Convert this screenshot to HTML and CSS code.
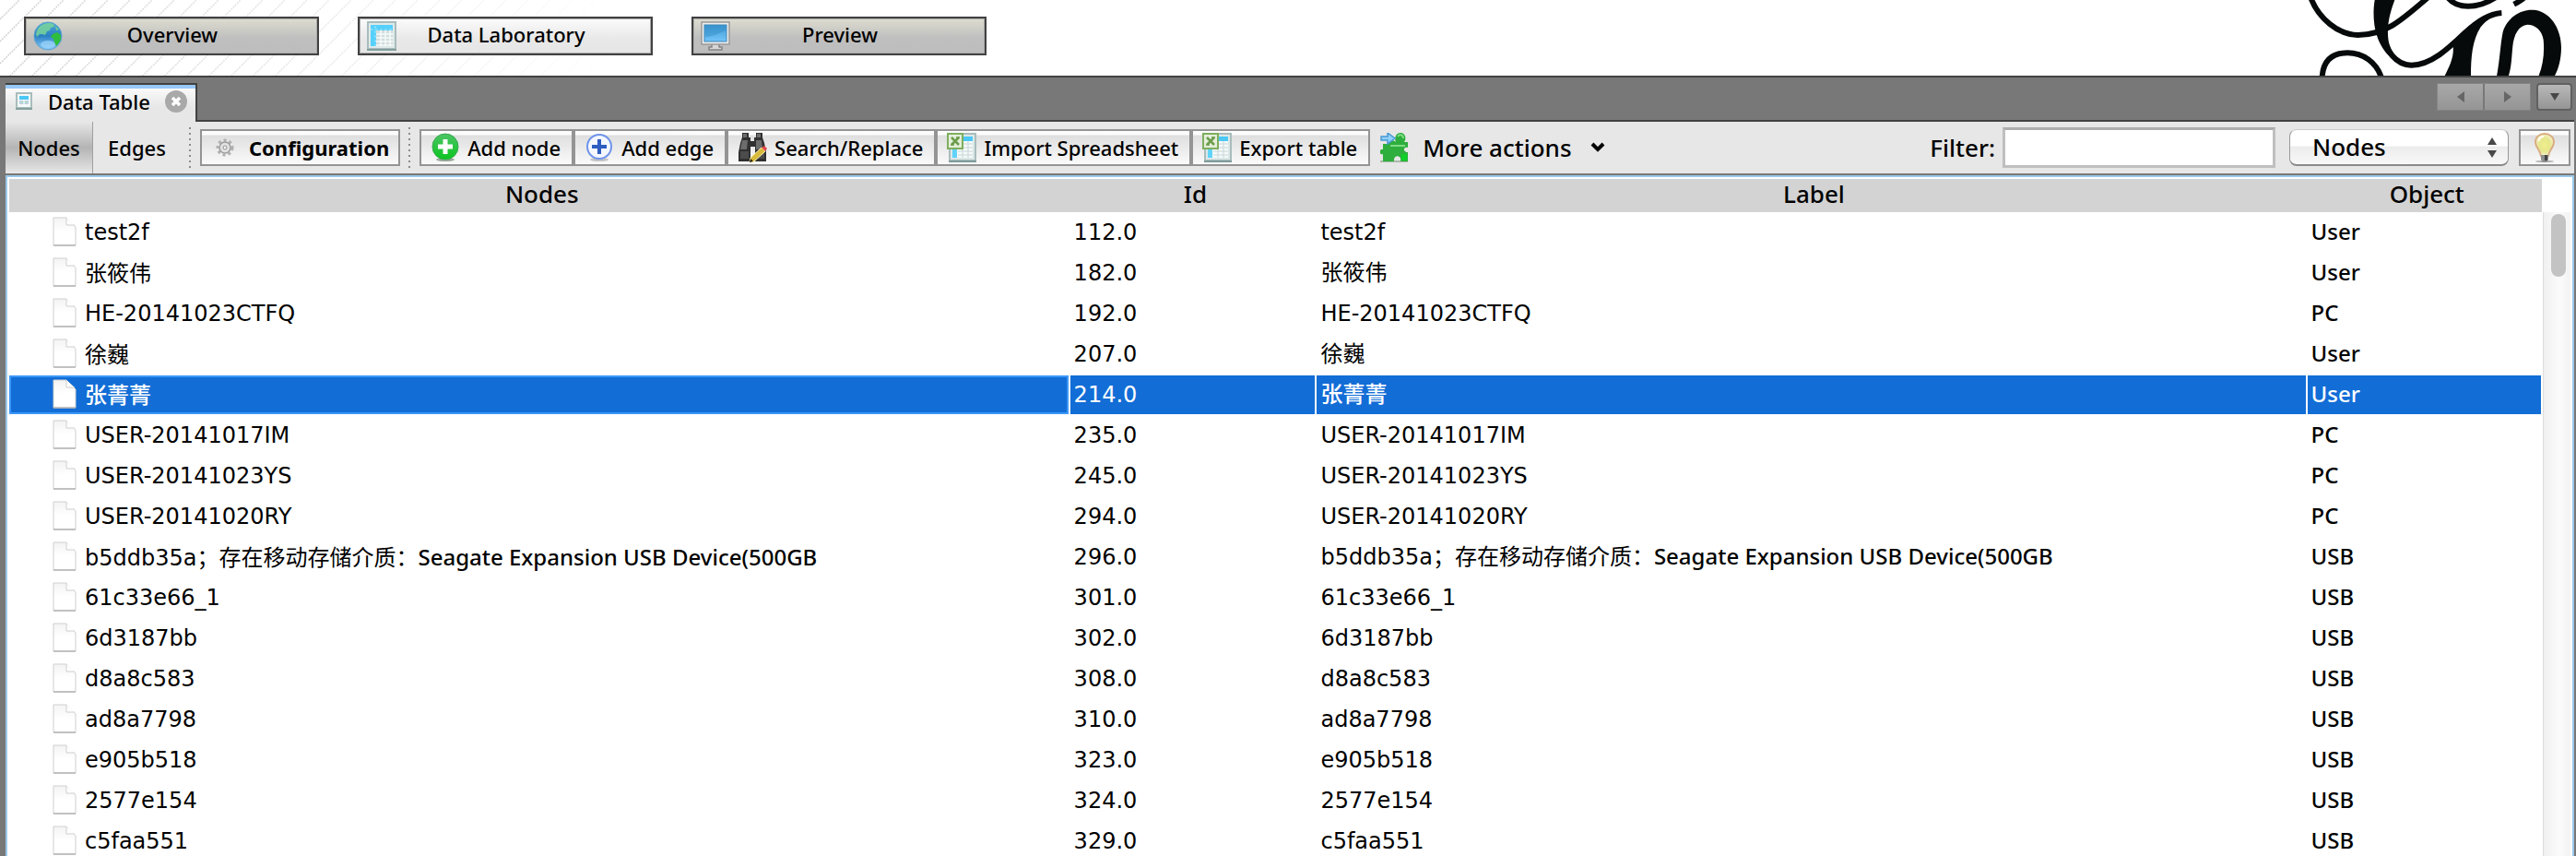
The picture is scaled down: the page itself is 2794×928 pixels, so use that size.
FILE: index.html
```html
<!DOCTYPE html>
<html lang="en">
<head>
<meta charset="utf-8">
<title>Data Laboratory</title>
<link rel="stylesheet" href="styles.css">
</head>
<body>
<svg class="defs" aria-hidden="true">
  <defs>
    <linearGradient id="page-fill" x1="0" y1="0" x2="0" y2="1"><stop offset="0" stop-color="#f3f3f3"/><stop offset=".5" stop-color="#fff"/></linearGradient>
    <linearGradient id="ocean" x1="0" y1="0" x2="0" y2="1"><stop offset="0" stop-color="#4fa6da"/><stop offset=".5" stop-color="#2a80c2"/><stop offset="1" stop-color="#8ccfff"/></linearGradient>
    <linearGradient id="screen" x1="0" y1="0" x2="0" y2="1"><stop offset="0" stop-color="#3d97cf"/><stop offset="1" stop-color="#74c6fb"/></linearGradient>
    <linearGradient id="green" x1="0" y1="0" x2="0" y2="1"><stop offset="0" stop-color="#4cc465"/><stop offset="1" stop-color="#0bc51f"/></linearGradient>
    <radialGradient id="glow"><stop offset="0" stop-color="#f0f08c"/><stop offset=".6" stop-color="#e6e68c"/><stop offset="1" stop-color="#f4f2cc"/></radialGradient>
    <symbol id="page" viewBox="0 0 28 32">
      <path d="M2 1h14l10 10v20H2z" fill="url(#page-fill)" stroke="#cfcfcf" stroke-width="1"/>
      <path d="M2 31h24" stroke="#b4b4b4" stroke-width="1.500"/>
      <path d="M16 1v8h9" fill="#fff" stroke="#cfcfcf"/>
    </symbol>
    <symbol id="sheet" viewBox="0 0 32 32">
      <rect x="3" y="1" width="28" height="29" fill="#dce8e8" stroke="#a9bcbc" stroke-width="2"/>
      <path d="M2 31h30" stroke="#7f9c9c" stroke-width="2"/>
      <rect x="6" y="4" width="22" height="23" fill="#f4f9f9"/>
      <path d="M18 4h10v5H18z" fill="#4cc8f5"/><path d="M6 18h5v9H6z" fill="#5fd3fa"/>
      <path d="M12 12h16M12 16h16M12 20h16M12 24h16M17 9v18M23 9v18" stroke="#c9d6d6" stroke-width="1"/>
      <rect x="1" y="1" width="16" height="16" fill="#e4efda" stroke="#7fae5e" stroke-width="2"/>
      <path d="M5 5l8 8M13 5l-8 8" stroke="#6c9c4c" stroke-width="2.500"/><path d="M4 13h4M10 5h4" stroke="#6c9c4c" stroke-width="1.500"/>
    </symbol>
  </defs>
</svg>

<header class="banner">
  <svg class="hatch" aria-hidden="true">
    <defs>
      <pattern id="stripes" width="24" height="24" patternUnits="userSpaceOnUse">
        <path d="M0 21L21 0M20 25L25 20" stroke="#d2d2d2" stroke-width="1.500" stroke-dasharray="2 1"/>
      </pattern>
      <linearGradient id="fade"><stop offset="0" stop-color="#fff"/><stop offset="1" stop-color="#fff" stop-opacity="0"/></linearGradient>
      <mask id="fader"><rect width="100%" height="100%" fill="url(#fade)"/></mask>
    </defs>
    <rect width="100%" height="100%" fill="url(#stripes)" mask="url(#fader)"/>
  </svg>
  <nav class="perspectives">
    <button class="perspective" type="button">
      <svg class="icon" viewBox="0 0 32 32"><circle cx="16" cy="16" r="15" fill="url(#ocean)" stroke="#5aa4cf" stroke-width="1"/><path d="M8 5c4-3 10-4 14-2l1 3-4 1-1 3-3 1-2 4-3-1-3 0-3 3-1-3c1-4 2-7 5-9z" fill="#78d39a" opacity=".85"/><path d="M21 14l5-2 4 3v4c-1 4-3 6-5 8l-2-4-1-4-3-2z" fill="#2fbd3e"/><path d="M24 5l4 4-3 1z" fill="#6fd08c"/><ellipse cx="16" cy="25" rx="8" ry="4" fill="#a8defe" opacity=".6"/></svg>
      <span>Overview</span>
    </button>
    <button class="perspective active" type="button">
      <svg class="icon" viewBox="0 0 32 32"><rect x="1" y="1" width="30" height="29" fill="#dfe9e9" stroke="#a9bcbc" stroke-width="2"/><path d="M0 31h32" stroke="#839f9f" stroke-width="2"/><rect x="4" y="4" width="24" height="23" fill="#d3dddd"/><path d="M4 4h24v6H10v17H4z" fill="#55d0fa"/><path d="M10 14h18M10 18h18M10 22h18M10 26h18M15 10v17M20 10v17M25 10v17" stroke="#f6fafa" stroke-width="1.500"/><path d="M4 9h24M9 5v22" stroke="#a5e6fc" stroke-width="1" stroke-dasharray="3 2"/></svg>
      <span>Data Laboratory</span>
    </button>
    <button class="perspective" type="button">
      <svg class="icon" viewBox="0 0 32 32"><path d="M12 24h8v4h3v3H9v-3h3z" fill="#d6d6d6" stroke="#858585" stroke-width="1.500"/><rect x="1" y="1" width="30" height="24" fill="#ededed" stroke="#9a9a9a" stroke-width="1.500"/><rect x="4" y="4" width="24" height="18" fill="url(#screen)" stroke="#3a86b8"/><path d="M5 17c8 0 15-4 22-7v-5H5z" fill="#2f8ac6" opacity=".4"/></svg>
      <span>Preview</span>
    </button>
  </nav>
  <svg class="logo" viewBox="0 0 1062 246" role="img" aria-label="Gephi">
    <g fill="none" stroke="#060a0a" stroke-width="18">
      <path d="M198-10C223 60 290 114 352 114C440 114 490 70 580-8"/>
      <path d="M645-8C675 30 740 30 800-8"/>
      <path d="M860 14C872 8 884 2 892-6"/>
      <path d="M236 250C240 190 275 172 318 172C372 172 412 205 428 250"/>
      <path d="M430 95C440 170 480 212 526 212C590 212 650 155 700 107C745 66 780 45 820 42"/>
    </g>
    <g fill="#060a0a">
      <path d="M408-5H474C452 50 444 100 454 142C466 180 486 200 506 212C450 198 414 140 406 80C402 50 403 20 408-5Z"/>
      <path d="M820 38C760 42 715 84 672 126L662 152C666 186 648 220 634 248H720C720 190 724 130 752 88C770 66 790 52 818 46Z"/>
      <path d="M804 248C815 190 815 150 824 104C838 58 880 30 922 32C975 34 1014 90 1014 154C1014 190 1006 224 992 248H940C955 212 960 170 956 130C952 98 928 80 904 80C876 82 860 112 856 150C852 190 852 220 842 248Z"/>
    </g>
  </svg>
</header>

<div class="tabbar">
  <div class="tab">
    <svg class="tab-icon" viewBox="0 0 20 20"><rect x="2" y="1" width="16" height="16" fill="#f4f8f8" stroke="#a9bcbc" stroke-width="2"/><path d="M1 18h18" stroke="#839f9f" stroke-width="2"/><path d="M5 4h10v4H5z" fill="#4cc8f5"/><path d="M5 9h10v4H5z" fill="#b9d4dc"/><path d="M10 8v6" stroke="#fff"/></svg>
    <span>Data Table</span>
    <button class="close" type="button" aria-label="Close"><svg viewBox="0 0 24 24"><circle cx="12" cy="12" r="12" fill="#a9a9a9"/><path d="M8 8l8 8M16 8l-8 8" stroke="#fff" stroke-width="3.500"/></svg></button>
  </div>
  <div class="tab-nav">
    <div class="pager">
      <button type="button" aria-label="Previous tab"><svg viewBox="0 0 12 12"><path d="M10 0v12L2 6z" fill="#666"/></svg></button>
      <button type="button" aria-label="Next tab"><svg viewBox="0 0 12 12"><path d="M2 0v12l8-6z" fill="#666"/></svg></button>
    </div>
    <button class="list" type="button" aria-label="Tab list"><svg viewBox="0 0 12 12"><path d="M1 2h10L6 10z" fill="#484848"/></svg></button>
  </div>
</div>

<main class="panel">
  <div class="toolbar">
    <button class="toggle selected" type="button">Nodes</button>
    <button class="toggle" type="button">Edges</button>
    <span class="divider"></span>
    <button class="tool config" type="button">
      <svg class="gear" viewBox="0 0 20 20"><circle cx="10" cy="10" r="8" fill="none" stroke="#b0b0b0" stroke-width="3" stroke-dasharray="3 3"/><circle cx="10" cy="10" r="6" fill="#e2e2e2" stroke="#9c9c9c" stroke-width="1.500"/><circle cx="10" cy="10" r="2" fill="#fff" stroke="#8c8c8c"/></svg>
      <span>Configuration</span>
    </button>
    <span class="divider"></span>
    <div class="tools">
      <button class="tool" type="button">
        <svg class="icon" viewBox="0 0 32 32"><ellipse cx="16" cy="29" rx="10" ry="2" fill="#9aa89a"/><circle cx="16" cy="15" r="14" fill="url(#green)" stroke="#37a94e"/><path d="M16 7v16M8 15h16" stroke="#fff" stroke-width="5"/></svg>
        <span>Add node</span>
      </button>
      <button class="tool" type="button">
        <svg class="icon" viewBox="0 0 32 32"><ellipse cx="16" cy="29" rx="10" ry="2" fill="#c4c4c4"/><circle cx="16" cy="15" r="13" fill="#f5f7ff" stroke="#6f94ea" stroke-width="2"/><path d="M16 7v16M8 15h16" stroke="#2e5cc0" stroke-width="4"/></svg>
        <span>Add edge</span>
      </button>
      <button class="tool" type="button">
        <svg class="icon" viewBox="0 0 32 32"><path d="M5 0h7v5h2v4h4V5h2V0h7v5l2 6 2 10v10H19V15h-5v16H1V21L3 11l2-6z" fill="#303030"/><path d="M6 1h4v4H6zM21 1h4v4h-4zM5 8h6l-1 10H3zM20 8h6l1 10h-7z" fill="#6c6c6c"/><path d="M3 20h9v8H3zM21 20h8v8h-8z" fill="#4c4c4c"/><path d="M14 27l12-11 4 4-12 11-5 1z" fill="#d8ba3c" stroke="#fff4b8" stroke-width="1"/><path d="M26 16l3-2 3 3-2 3z" fill="#e04848"/><path d="M13 32l1-4 3 3z" fill="#201c10"/></svg>
        <span>Search/Replace</span>
      </button>
      <button class="tool" type="button">
        <svg class="icon"><use href="#sheet"/></svg>
        <span>Import Spreadsheet</span>
      </button>
      <button class="tool" type="button">
        <svg class="icon"><use href="#sheet"/></svg>
        <span>Export table</span>
      </button>
    </div>
    <button class="more" type="button">
      <svg class="icon" viewBox="0 0 32 32"><path d="M0 31h30" stroke="#aab8aa" stroke-width="2"/><path d="M17 10c-2-4 0-10 5-10s7 6 4 10h4v6c-5-2-6 5 0 5v10h-8c2-7-8-8-7 0H3v-8c-4 2-5-6 0-5v-6h6c0-4 5-5 8-2z" fill="#2eae3c"/><path d="M19 4c2-3 6-2 6 2M11 14h16" stroke="#7fdc86" stroke-width="2" fill="none"/><path d="M23 23h6v7h-6z" fill="#10cf28"/><path d="M1 4h7V0l8 6-8 6V8H1z" fill="#8fd0f8" stroke="#4a98d4" stroke-width="1.500"/></svg>
      <span>More actions</span>
      <svg class="chevron" viewBox="0 0 16 12"><path d="M2 2l6 6 6-6" fill="none" stroke="#000" stroke-width="4"/></svg>
    </button>
    <div class="filters">
      <label for="filter">Filter:</label>
      <input id="filter" class="filter" type="text">
      <span class="combo">
        <select aria-label="Filter column"><option>Nodes</option><option>Id</option><option>Label</option><option>Object</option></select>
        <svg class="combo-arrows" viewBox="0 0 10 22"><path d="M0 8l5-8 5 8zM0 14h10l-5 8z" fill="#484848"/></svg>
      </span>
      <button class="tool hint" type="button" aria-label="Hint">
        <svg viewBox="0 0 24 32"><ellipse cx="12" cy="31" rx="10" ry="1" fill="#aaa"/><path d="M12 1c-6 0-10 4-10 9 0 6 5 8 6 15h8c1-7 6-9 6-15 0-5-4-9-10-9z" fill="url(#glow)" stroke="#d8ac80" stroke-width="2"/><path d="M8 24h8v5l-2 3h-4l-2-3z" fill="#8e8e8e"/><path d="M12 24h3v6h-3z" fill="#444"/><path d="M6 9c0-3 2-5 5-5" stroke="#fffff0" stroke-width="2" fill="none"/></svg>
      </button>
    </div>
  </div>

  <div class="outline">
    <div class="grid">
      <table>
        <colgroup><col class="c-nodes"><col class="c-id"><col class="c-label"><col class="c-object"></colgroup>
        <thead><tr><th>Nodes</th><th>Id</th><th>Label</th><th>Object</th></tr></thead>
        <tbody>
          <tr><td><div class="node"><svg class="page"><use href="#page"/></svg><span class="code">test2f</span></div></td><td class="code">112.0</td><td class="code">test2f</td><td>User</td></tr>
          <tr><td><div class="node"><svg class="page"><use href="#page"/></svg><span>张筱伟</span></div></td><td class="code">182.0</td><td>张筱伟</td><td>User</td></tr>
          <tr><td><div class="node"><svg class="page"><use href="#page"/></svg><span class="code">HE-20141023CTFQ</span></div></td><td class="code">192.0</td><td class="code">HE-20141023CTFQ</td><td>PC</td></tr>
          <tr><td><div class="node"><svg class="page"><use href="#page"/></svg><span>徐巍</span></div></td><td class="code">207.0</td><td>徐巍</td><td>User</td></tr>
          <tr class="current"><td><div class="node"><svg class="page"><use href="#page"/></svg><span>张菁菁</span></div></td><td class="code">214.0</td><td>张菁菁</td><td>User</td></tr>
          <tr><td><div class="node"><svg class="page"><use href="#page"/></svg><span class="code">USER-20141017IM</span></div></td><td class="code">235.0</td><td class="code">USER-20141017IM</td><td>PC</td></tr>
          <tr><td><div class="node"><svg class="page"><use href="#page"/></svg><span class="code">USER-20141023YS</span></div></td><td class="code">245.0</td><td class="code">USER-20141023YS</td><td>PC</td></tr>
          <tr><td><div class="node"><svg class="page"><use href="#page"/></svg><span class="code">USER-20141020RY</span></div></td><td class="code">294.0</td><td class="code">USER-20141020RY</td><td>PC</td></tr>
          <tr><td><div class="node"><svg class="page"><use href="#page"/></svg><span><span class="code">b5ddb35a</span>；存在移动存储介质：<span class="device">Seagate Expansion USB Device(500GB</span></span></div></td><td class="code">296.0</td><td><span class="code">b5ddb35a</span>；存在移动存储介质：<span class="device">Seagate Expansion USB Device(500GB</span></td><td>USB</td></tr>
          <tr><td><div class="node"><svg class="page"><use href="#page"/></svg><span class="code">61c33e66_1</span></div></td><td class="code">301.0</td><td class="code">61c33e66_1</td><td>USB</td></tr>
          <tr><td><div class="node"><svg class="page"><use href="#page"/></svg><span class="code">6d3187bb</span></div></td><td class="code">302.0</td><td class="code">6d3187bb</td><td>USB</td></tr>
          <tr><td><div class="node"><svg class="page"><use href="#page"/></svg><span class="code">d8a8c583</span></div></td><td class="code">308.0</td><td class="code">d8a8c583</td><td>USB</td></tr>
          <tr><td><div class="node"><svg class="page"><use href="#page"/></svg><span class="code">ad8a7798</span></div></td><td class="code">310.0</td><td class="code">ad8a7798</td><td>USB</td></tr>
          <tr><td><div class="node"><svg class="page"><use href="#page"/></svg><span class="code">e905b518</span></div></td><td class="code">323.0</td><td class="code">e905b518</td><td>USB</td></tr>
          <tr><td><div class="node"><svg class="page"><use href="#page"/></svg><span class="code">2577e154</span></div></td><td class="code">324.0</td><td class="code">2577e154</td><td>USB</td></tr>
          <tr><td><div class="node"><svg class="page"><use href="#page"/></svg><span class="code">c5faa551</span></div></td><td class="code">329.0</td><td class="code">c5faa551</td><td>USB</td></tr>
        </tbody>
      </table>
    </div>
    <div class="scrollbar"><div class="thumb"></div></div>
  </div>
</main>
</body>
</html>
```

FILE: styles.css
```css
* { box-sizing: border-box; }

body {
  margin: 0;
  height: 100vh;
  display: flex;
  flex-direction: column;
  overflow: hidden;
  background: #787878;
  color: #000;
  font: 500 22px/30px "Noto Sans", "Noto Sans CJK SC", sans-serif;
}

button, input, select {
  margin: 0;
  padding: 0;
  border: 0;
  background: none;
  color: inherit;
  font: inherit;
}

svg { display: block; flex: none; }
.defs { position: absolute; width: 0; height: 0; }
.icon { width: 32px; height: 32px; }

/* Perspective banner */
.banner {
  position: relative;
  flex: none;
  display: flex;
  justify-content: space-between;
  height: 84px;
  background: #fff;
  border-bottom: 2px solid #414141;
}
.hatch { position: absolute; left: 0; top: 0; width: 680px; height: 100%; }
.perspectives {
  position: relative;
  display: flex;
  gap: 42px;
  padding: 18px 26px;
}
.perspective {
  display: grid;
  grid-template-columns: 32px 1fr 32px;
  align-items: center;
  width: 320px;
  height: 42px;
  padding: 0 8px;
  border: 2px solid #414141;
  background: linear-gradient(#deddd0, #bfbfbf 55%, #bdbdbd);
  box-shadow: inset 0 0 0 1px #aaa;
}
.perspective span { padding: 0 0 4px 2px; }
.perspective.active { background: linear-gradient(#fbfbfb, #e8e8e8 60%, #e6e6e6); }
.logo { width: 354px; height: 82px; }

/* Tab strip */
.tabbar {
  flex: none;
  display: flex;
  justify-content: space-between;
  align-items: flex-start;
  height: 48px;
  margin: 0 2px 0 6px;
  padding-top: 6px;
  box-shadow: inset 0 -2px #414141;
}
.tab {
  display: flex;
  align-items: center;
  height: 42px;
  padding: 0 9px 4px 10px;
  border-top: 2px solid #414141;
  border-right: 2px solid #414141;
  background: linear-gradient(#99c8f8 4px, #fafafa 4px, #e7e7e7 60%);
}
.tab-icon { width: 20px; height: 20px; margin-right: 16px; }
.close { width: 24px; height: 24px; margin-left: 16px; }
.tab-nav { display: flex; gap: 6px; padding-right: 2px; }
.pager { display: flex; gap: 2px; border: 1px solid #858585; }
.tab-nav button {
  display: grid;
  place-items: center;
  width: 49px;
  height: 28px;
  background: linear-gradient(#a8a8a8, #959595);
}
.tab-nav svg { width: 12px; height: 12px; }
.tab-nav .list {
  width: 39px;
  height: 30px;
  border: 2px solid #606060;
  border-radius: 4px;
  background: linear-gradient(#b8b8b8, #959595);
}

/* Toolbar */
.panel {
  flex: 1;
  min-height: 0;
  display: flex;
  flex-direction: column;
  margin: 0 2px 0 6px;
}
.toolbar {
  flex: none;
  display: flex;
  align-items: center;
  height: 56px;
  padding-right: 4px;
  background: #e7e7e7;
}
.toggle { width: 95px; height: 56px; }
.toggle.selected {
  border-right: 1px solid #a0a0a0;
  background: linear-gradient(#e7e7e7, #b4b4b4 50%, #e7e7e7);
}
.divider {
  width: 2px;
  height: 44px;
  margin: 0 10px 0 9px;
  background: repeating-linear-gradient(#8c8c8c 0 2px, transparent 2px 6px);
}
.tool {
  display: flex;
  align-items: center;
  height: 40px;
  border: 2px solid #949494;
  background: linear-gradient(#fcfcfc 4px, #dfdfdf 5px, #fafafa);
}
.tools { display: flex; }
.tools .tool { gap: 8px; padding: 0 12px 0 10px; }
.config { gap: 16px; padding: 0 10px 0 15px; font-weight: 700; }
.gear { width: 20px; height: 20px; }
.more { display: flex; align-items: center; gap: 14px; margin-left: 11px; font-size: 26px; }
.chevron { width: 16px; height: 12px; margin-left: 6px; }
.filters { flex: 1; display: flex; align-items: center; justify-content: flex-end; font-size: 26px; }
.filter {
  width: 296px;
  height: 44px;
  margin: 0 15px 0 8px;
  padding: 0 8px;
  border: 3px solid #bfbfbf;
  border-top-color: #adadad;
  background: #fff;
}
.combo { position: relative; width: 238px; margin-right: 11px; }
.combo select {
  display: block;
  appearance: none;
  width: 100%;
  height: 40px;
  padding: 0 24px 2px;
  border: 1px solid #999;
  border-top-color: #ccc;
  border-bottom: 2px solid #8a8a8a;
  border-radius: 8px;
  background: linear-gradient(#fff 45%, #ececec 50%, #f8f8f8);
}
.combo-arrows { position: absolute; right: 13px; top: 9px; width: 10px; height: 22px; pointer-events: none; }
.combo select { font-size: 26px; }
.hint { justify-content: center; width: 56px; }
.hint svg { width: 24px; height: 32px; }

/* Data table */
.outline {
  flex: 1;
  min-height: 0;
  display: flex;
  margin-top: 2px;
  padding: 2px 2px 0;
  border: 2px solid #9bc9ea;
  border-bottom: 0;
  background: #fff;
}
.grid { flex: 1; min-width: 0; }
table { width: 100%; table-layout: fixed; border-collapse: collapse; }
.c-nodes { width: 41.85%; }
.c-id { width: 9.75%; }
.c-label { width: 39.1%; }
.c-object { width: 9.3%; }
th {
  height: 36px;
  padding: 0 0 4px 6px;
  background: #d3d3d3;
  font-size: 26px;
  font-weight: 500;
}
td {
  height: 44px;
  padding: 0 4px 2px;
  border-right: 2px solid #fff;
  border-bottom: 2px solid #fff;
  font-size: 24px;
  font-weight: 400;
  white-space: nowrap;
}
td:last-child, .device { font-weight: 500; }
td.code { padding-bottom: 0; }
td:first-child { padding: 0 4px 0 46px; }
.node { display: flex; align-items: center; gap: 8px; }
.page { width: 28px; height: 32px; margin-bottom: 2px; }
.code { font-family: "DejaVu Sans", sans-serif; }
.current td { background: #126dd6; color: #fff; font-weight: 500; }
.current td:first-child { box-shadow: inset 0 0 0 2px #3b97f7; }
.scrollbar {
  flex: none;
  width: 30px;
  margin-top: 36px;
  padding: 2px 6px 0 8px;
  border-left: 1px solid #ddd;
  background: linear-gradient(90deg, #f0f0f0, #fbfbfb 60%, #f2f2f2);
}
.thumb { width: 16px; height: 68px; border-radius: 8px; background: #c3c3c3; }
```
